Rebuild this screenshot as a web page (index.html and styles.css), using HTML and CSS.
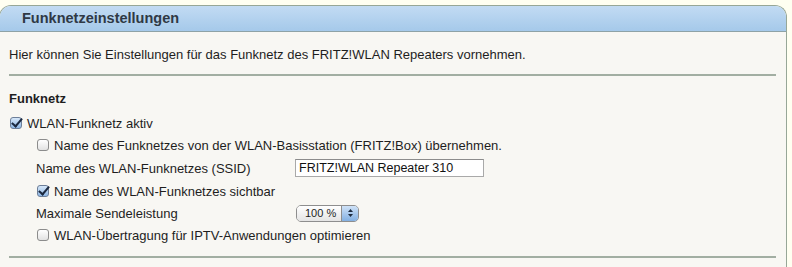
FILE: index.html
```html
<!DOCTYPE html>
<html lang="de">
<head>
    <meta charset="UTF-8">
    <title>Funknetzeinstellungen</title>
    <link rel="stylesheet" href="styles.css">
</head>
<body>
    <div class="panel">
        <div class="panel-head">Funknetzeinstellungen</div>
        <div class="panel-body">
            <p class="intro">Hier können Sie Einstellungen für das Funknetz des FRITZ!WLAN Repeaters vornehmen.</p>
            <hr>
            <h2>Funknetz</h2>
            <label class="row">
                <input type="checkbox" class="check" checked>
                <span>WLAN-Funknetz aktiv</span>
            </label>
            <div class="sub">
                <label class="row">
                    <input type="checkbox" class="check">
                    <span>Name des Funknetzes von der WLAN-Basisstation (FRITZ!Box) übernehmen.</span>
                </label>
                <div class="row row-tall">
                    <span class="field-label">Name des WLAN-Funknetzes (SSID)</span>
                    <input type="text" class="text-input" value="FRITZ!WLAN Repeater 310">
                </div>
                <label class="row">
                    <input type="checkbox" class="check" checked>
                    <span>Name des WLAN-Funknetzes sichtbar</span>
                </label>
                <div class="row">
                    <span class="field-label">Maximale Sendeleistung</span>
                    <div class="popup">
                        <span class="popup-value">100 %</span>
                        <span class="popup-arrows">
                            <svg width="7" height="10" viewBox="0 0 7 10">
                                <path d="M3.5 1 L6 4 L1 4 Z" fill="#1d2b3f"/>
                                <path d="M3.5 9 L6 6 L1 6 Z" fill="#1d2b3f"/>
                            </svg>
                        </span>
                    </div>
                </div>
                <label class="row">
                    <input type="checkbox" class="check">
                    <span>WLAN-Übertragung für IPTV-Anwendungen optimieren</span>
                </label>
            </div>
            <hr class="bottom-rule">
        </div>
    </div>
</body>
</html>
```
FILE: styles.css
```css
/* Funknetzeinstellungen */
body {
    margin: 0;
    padding-top: 5px;
    background-color: #fffff1;
    font-family: "Liberation Sans", Arial, sans-serif;
    font-size: 13px;
    color: #1e1e1e;
}

.panel {
    width: 786px;
    margin-left: -1px;
    border: 1px solid #97a797;
    border-bottom: none;
    border-radius: 12px 12px 0 0;
    background-color: #f8f7f3;
    overflow: hidden;
}

.panel-head {
    height: 25px;
    line-height: 25px;
    padding-left: 22px;
    background: linear-gradient(#c2dbf3, #a5c9ea);
    border-bottom: 1px solid #8ea2a6;
    font-size: 14.5px;
    font-weight: bold;
    color: #2f3945;
}

.panel-body {
    padding: 15px 10px 9px 9px;
}

.intro {
    margin: 0;
    line-height: 16px;
}

hr {
    margin: 11px 0 0 0;
    border: none;
    border-top: 2px solid #a2aea2;
    height: 0;
}

h2 {
    margin: 15px 0 5px 0;
    font-size: 13px;
    line-height: 16px;
    font-weight: bold;
}

.row {
    display: flex;
    align-items: center;
    height: 22px;
}

.row-tall {
    height: 24px;
}

.sub {
    padding-left: 27px;
}

.check {
    appearance: none;
    -webkit-appearance: none;
    position: relative;
    width: 12px;
    height: 12px;
    margin: 0 5px 0 1px;
    border: 1px solid #8c8c8c;
    border-radius: 3px;
    background: linear-gradient(#ffffff, #e2e2e2);
}

.check:checked {
    background: linear-gradient(#d6e7f9, #8db6e4);
    border-color: #6d7f99;
}

.check:checked::after {
    content: "";
    position: absolute;
    left: 3px;
    top: -2px;
    width: 4px;
    height: 9px;
    border-right: 2px solid #1b2940;
    border-bottom: 2px solid #1b2940;
    transform: rotate(40deg);
}

.field-label {
    width: 259px;
}

.text-input {
    width: 181px;
    height: 16px;
    margin: 0;
    padding: 0 3px;
    border: 1px solid #a9a9a9;
    border-top-color: #8c8c8c;
    background-color: #fff;
    font-family: "Liberation Sans", Arial, sans-serif;
    font-size: 12.5px;
    color: #111;
}

.popup {
    display: flex;
    width: 61px;
    height: 15px;
    margin-left: 1px;
    border: 1px solid #8e8e8e;
    border-radius: 5px;
    overflow: hidden;
    font-size: 11px;
}

.popup-value {
    flex: 1;
    padding-left: 8px;
    line-height: 15px;
    background: linear-gradient(#ffffff, #e4e4e4);
}

.popup-arrows {
    display: flex;
    align-items: center;
    justify-content: center;
    width: 16px;
    border-left: 1px solid #8e8e8e;
    background: linear-gradient(#cfe2f7, #83b0e2);
}

.bottom-rule {
    margin-top: 10px;
}
```
